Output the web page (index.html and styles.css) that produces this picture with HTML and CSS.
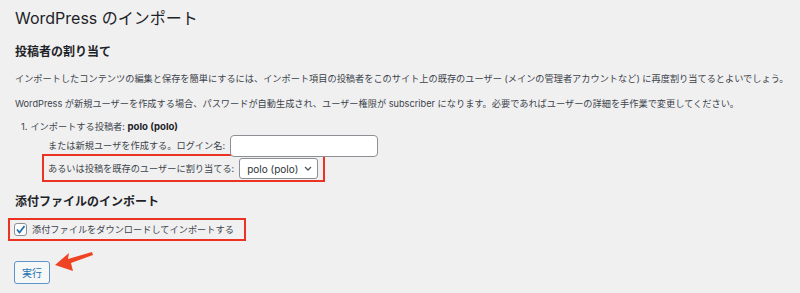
FILE: index.html
```html
<!DOCTYPE html>
<html lang="ja">
<head>
    <meta charset="UTF-8">
    <meta name="viewport" content="width=device-width, initial-scale=1.0">
    <title>WordPress のインポート</title>
    <link rel="stylesheet" href="styles.css">
</head>
<body>
    <div class="wrap">
        <h1>WordPress のインポート</h1>

        <!-- Author assignment -->
        <h2>投稿者の割り当て</h2>
        <p class="desc">インポートしたコンテンツの編集と保存を簡単にするには、インポート項目の投稿者をこのサイト上の既存のユーザー (メインの管理者アカウントなど) に再度割り当てるとよいでしょう。</p>
        <p class="desc">WordPress が新規ユーザーを作成する場合、パスワードが自動生成され、ユーザー権限が subscriber になります。必要であればユーザーの詳細を手作業で変更してください。</p>
        <ol class="authors">
            <li>
                <div class="author-line"><span class="num">1.</span>インポートする投稿者: <strong>polo (polo)</strong></div>
                <div class="field-row">または新規ユーザを作成する。ログイン名:<input class="login-input" type="text"></div>
                <div class="field-row mark">あるいは投稿を既存のユーザーに割り当てる:<span class="select">polo (polo)<svg width="8" height="5" viewBox="0 0 8 5"><path d="M1 1 L4 4 L7 1" fill="none" stroke="#50575e" stroke-width="1.3"/></svg></span></div>
            </li>
        </ol>

        <!-- Attachments -->
        <h2 class="second">添付ファイルのインポート</h2>
        <label class="check-row mark"><span class="checkbox"><svg width="11" height="11" viewBox="0 0 11 11"><path d="M2 5.5 L4.5 8.5 L9.5 2" fill="none" stroke="#2271b1" stroke-width="1.8"/></svg></span>添付ファイルをダウンロードしてインポートする</label>

        <div class="submit-row">
            <button type="button">実行</button>
            <svg class="arrow" width="42" height="24" viewBox="0 0 42 24"><path d="M1 15 L15 3 L14 9 L38 2 L39 5 L17 13 L19 21 Z" fill="#ef4423"/></svg>
        </div>
    </div>
</body>
</html>
```

FILE: styles.css
```css
body {
    margin: 0;
    background: #f0f0f1;
    font-family: Inter, "Noto Sans CJK JP", sans-serif;
    color: #3c434a;
}

.wrap {
    padding: 6px 0 0 15px;
}

h1 {
    margin: 0;
    font-size: 16px;
    font-weight: 400;
    line-height: 24px;
    color: #1d2327;
}

h2 {
    margin: 14px 0 0;
    font-size: 12px;
    font-weight: 700;
    line-height: 16px;
    color: #1d2327;
}

h2.second {
    margin-top: 12px;
}

.desc {
    margin: 12px 0 0;
    font-size: 9.2px;
    line-height: 14px;
}

.desc + .desc {
    margin-top: 11px;
}

.authors {
    list-style: none;
    margin: 9px 0 0;
    padding: 0 0 0 6px;
    font-size: 9.2px;
    line-height: 14px;
}

.num {
    margin-right: 3px;
}

.author-line strong {
    font-size: 9.6px;
    color: #1d2327;
}

.field-row {
    display: flex;
    align-items: center;
    width: max-content;
    margin: 1px 0 0 27px;
}

.login-input {
    box-sizing: border-box;
    width: 148px;
    height: 22px;
    margin: 0 0 0 5px;
    padding: 0;
    border: 1px solid #8c8f94;
    border-radius: 4px;
    background: #fff;
}

.mark {
    border: 2px solid #eb3223;
}

.field-row.mark {
    margin: -3px 0 0 21px;
    padding: 2px 5px 1px 4px;
}

.select {
    display: flex;
    align-items: center;
    gap: 6px;
    box-sizing: border-box;
    height: 21px;
    margin-left: 5px;
    padding: 0 5px 0 7px;
    border: 1px solid #8c8f94;
    border-radius: 3px;
    background: #fff;
    font-size: 10px;
    color: #2c3338;
}

.check-row {
    display: flex;
    align-items: center;
    width: max-content;
    margin: 8px 0 0 -7px;
    padding: 3px 10px 3px 4px;
    font-size: 9.2px;
    line-height: 13px;
}

.checkbox {
    display: flex;
    align-items: center;
    justify-content: center;
    box-sizing: border-box;
    width: 13px;
    height: 13px;
    margin-right: 5px;
    border: 1px solid #8c8f94;
    border-radius: 3px;
    background: #fff;
}

.submit-row {
    position: relative;
    height: 23px;
    margin: 20px 0 0 -1px;
}

button {
    box-sizing: border-box;
    width: 36px;
    height: 23px;
    padding: 0;
    border: 1px solid #5b95c9;
    border-radius: 3px;
    background: #f6f7f7;
    color: #2271b1;
    font-family: inherit;
    font-size: 10px;
}

.arrow {
    position: absolute;
    left: 40px;
    top: -11px;
}
```
